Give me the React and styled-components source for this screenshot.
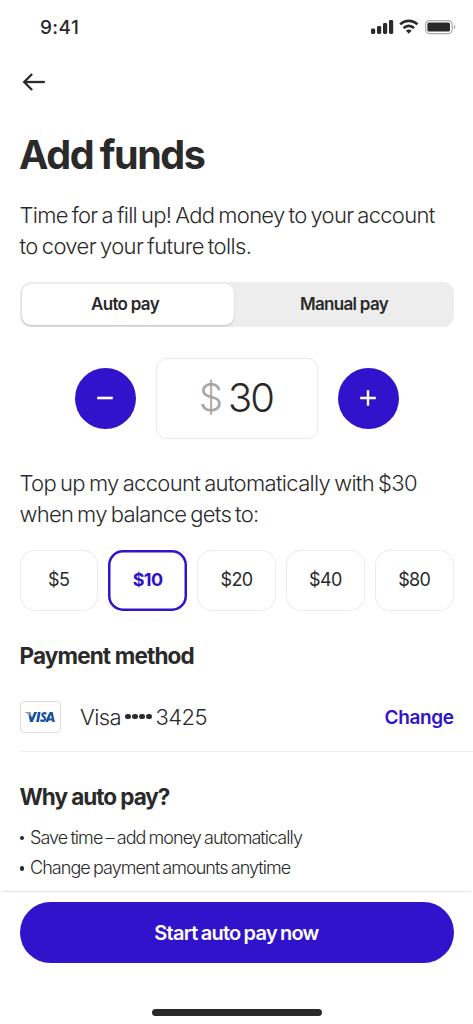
import React, { useState } from 'react'
import styled, { createGlobalStyle } from 'styled-components'

const thresholds = [5, 10, 20, 40, 80]

const reasons = [
  'Save time – add money automatically',
  'Change payment amounts anytime',
]

function StatusIcons() {
  return (
    <svg width="86" height="18" viewBox="0 0 86 18" fill="#2a2a2a">
      <rect x="1" y="10.5" width="4.2" height="5.5" rx="1.4" />
      <rect x="7" y="8" width="4.2" height="8" rx="1.4" />
      <rect x="13" y="5" width="4.2" height="11" rx="1.4" />
      <rect x="19" y="2" width="4.2" height="14" rx="1.4" />
      <g fill="none" stroke="#2a2a2a" strokeWidth="2.7">
        <path d="M30.2 6.4 a12.3 12.3 0 0 1 17.2 0" />
        <path d="M33.5 10.1 a7.6 7.6 0 0 1 10.6 0" />
      </g>
      <path d="M35.9 12.8 a4.2 4.2 0 0 1 5.8 0 L38.8 15.8 z" />
      <rect x="55.6" y="2.6" width="26.6" height="13" rx="4" fill="none" stroke="#a9a9a9" strokeWidth="1.2" />
      <rect x="57.4" y="4.6" width="22.6" height="9" rx="1.6" />
      <path d="M83.8 7 q1.6 0.5 1.6 2.1 t-1.6 2.1 z" fill="#a9a9a9" />
    </svg>
  )
}

function VisaLogo() {
  return (
    <svg width="30" height="12" viewBox="0 0 30 12">
      <path
        fill="#1552a0"
        d="M3.2 2 L7 6.6 L9.2 1 h2.9 L7.8 11 H5 z
           M12.9 1 h2.7 L13.9 11 h-2.7 z"
      />
      <path d="M0.2 1 h4.6 q1 0 1.2 0.9 l1 5 Q5 3 0.2 1.5 z" fill="#8d8f98" />
      <path d="M21.4 2.6 Q17.7 1.3 17.3 3.6 C17.1 5.5 20.5 5.8 20.1 8 Q19.5 10.7 15.3 9.3" fill="none" stroke="#1552a0" strokeWidth="2.2" />
      <path
        fill="#1552a0"
        fillRule="evenodd"
        d="M25.4 1 h2.3 L29.8 11 h-2.5 l-0.3-1.6 h-3.3 L23 11 h-2.8 l4-9.2 q0.3-0.8 1.2-0.8 z M26 3.8 l-1.5 3.7 h2.2 z"
      />
    </svg>
  )
}

function App() {
  const [mode, setMode] = useState('auto')
  const [amount, setAmount] = useState(30)
  const [threshold, setThreshold] = useState(10)

  return (
    <Screen>
      <GlobalStyle />
      <StatusBar>
        <Time>9:41</Time>
        <StatusIcons />
      </StatusBar>
      <Content>
        <BackButton aria-label="Back">
          <svg width="24" height="20" viewBox="0 0 24 20" fill="none" stroke="#2a2a2a" strokeWidth="2.3">
            <path d="M2.2 10 H22.8" />
            <path d="M10.1 2 L2.2 10 L10.1 18" />
          </svg>
        </BackButton>
        <Title>Add funds</Title>
        <Lead>
          <Line $ls="-0.71px">Time for a fill up! Add money to your account</Line>
          <Line $ls="-0.63px">to cover your future tolls.</Line>
        </Lead>
        <Segments>
          <Segment $active={mode === 'auto'} onClick={() => setMode('auto')}>Auto pay</Segment>
          <Segment $active={mode === 'manual'} onClick={() => setMode('manual')}>Manual pay</Segment>
        </Segments>
        <Stepper>
          <RoundButton aria-label="Less" onClick={() => setAmount(amount - 5)}>
            <svg width="16" height="16" viewBox="0 0 16 16" stroke="#fff" strokeWidth="2.6">
              <path d="M0.2 8 H15.8" />
            </svg>
          </RoundButton>
          <AmountBox>
            <Currency>$</Currency>
            <Amount>{amount}</Amount>
          </AmountBox>
          <RoundButton aria-label="More" onClick={() => setAmount(amount + 5)}>
            <svg width="16" height="16" viewBox="0 0 16 16" stroke="#fff" strokeWidth="2.4">
              <path d="M0.2 8 H15.8 M8 0.2 V15.8" />
            </svg>
          </RoundButton>
        </Stepper>
        <Lead $top="29.5px">
          <Line $ls="-0.67px">Top up my account automatically with ${amount}</Line>
          <Line $ls="-0.73px">when my balance gets to:</Line>
        </Lead>
        <Options>
          {thresholds.map((value) => (
            <Option key={value} $active={value === threshold} onClick={() => setThreshold(value)}>
              ${value}
            </Option>
          ))}
        </Options>
        <Heading $ls="-0.85px">Payment method</Heading>
        <PaymentRow>
          <CardBadge>
            <VisaLogo />
          </CardBadge>
          <CardName>
            <span>Visa</span>
            <Dots><i /><i /><i /><i /></Dots>
            <span>3425</span>
          </CardName>
          <ChangeLink>Change</ChangeLink>
        </PaymentRow>
        <Heading $ls="-1.03px">Why auto pay?</Heading>
        <Reasons>
          {reasons.map((reason) => (
            <li key={reason}>{reason}</li>
          ))}
        </Reasons>
      </Content>
      <Footer>
        <StartButton>Start auto pay now</StartButton>
        <HomeIndicator />
      </Footer>
    </Screen>
  )
}

export default App

const GlobalStyle = createGlobalStyle`
  * {
    box-sizing: border-box;
  }
  body {
    margin: 0;
    background: #fff;
  }
  button {
    font-family: inherit;
    color: inherit;
    border: 0;
    padding: 0;
    background: none;
    cursor: pointer;
  }
  svg {
    display: block;
  }
`

const Screen = styled.div`
  width: 473px;
  height: 1024px;
  display: flex;
  flex-direction: column;
  overflow: hidden;
  background: #fff;
  color: #2a2a2a;
  font-family: Inter, 'Liberation Sans', sans-serif;
`

const StatusBar = styled.div`
  height: 54px;
  padding: 0 17px 0 40px;
  display: flex;
  align-items: center;
  justify-content: space-between;
  flex-shrink: 0;
`

const Time = styled.span`
  font-size: 19px;
  font-weight: 500;
  letter-spacing: 0.4px;
`

const Content = styled.div`
  flex: 1;
  min-height: 0;
  padding: 0 19.5px;
`

const BackButton = styled.button`
  display: flex;
  align-items: center;
  width: 30px;
  height: 56px;
  padding-left: 2.5px;
`

const Title = styled.h1`
  margin: 21px 0 0 -0.5px;
  font-size: 39.5px;
  line-height: 48px;
  font-weight: 700;
  letter-spacing: -1.4px;
  word-spacing: -1.5px;
  white-space: nowrap;
`

const Lead = styled.p`
  margin: ${(props) => props.$top || '21px'} 0 0;
`

const Line = styled.span`
  display: block;
  font-size: 22px;
  line-height: 30.5px;
  font-weight: 350;
  letter-spacing: ${(props) => props.$ls};
  word-spacing: -1.5px;
  white-space: nowrap;
`

const Segments = styled.div`
  display: flex;
  height: 45px;
  margin-top: 21px;
  padding: 2px;
  border-radius: 11px;
  background: #ededed;
`

const Segment = styled.button`
  flex: ${(props) => (props.$active ? '0 0 212px' : '1')};
  padding: ${(props) => (props.$active ? '0 5px 2px 0' : '0 0 2px 3px')};
  border-radius: 9px;
  font-size: 17px;
  font-weight: 600;
  letter-spacing: -0.7px;
  background: ${(props) => (props.$active ? '#fff' : 'transparent')};
  box-shadow: ${(props) => (props.$active ? '0 1px 2px rgba(0, 0, 0, 0.2)' : 'none')};
`

const Stepper = styled.div`
  display: flex;
  align-items: center;
  justify-content: center;
  gap: 20px;
  margin-top: 30.5px;
`

const RoundButton = styled.button`
  display: flex;
  align-items: center;
  justify-content: center;
  width: 61px;
  height: 61px;
  border-radius: 50%;
  background: #3013ca;
`

const AmountBox = styled.div`
  display: flex;
  align-items: center;
  justify-content: center;
  gap: 5px;
  width: 162px;
  height: 81px;
  padding: 0 1px 2px 0;
  border: 1px solid #e9e9e9;
  border-radius: 10px;
  font-size: 40px;
  font-weight: 300;
`

const Currency = styled.span`
  color: #a6a6a6;
  font-size: 38px;
`

const Amount = styled.span`
  letter-spacing: -2px;
`

const Options = styled.div`
  display: grid;
  grid-template-columns: repeat(5, 1fr);
  gap: 10.4px;
  margin-top: 20.5px;
`

const Option = styled.button`
  height: 61px;
  padding-bottom: 1px;
  box-shadow: inset 0 0 0 ${(props) => (props.$active ? '2.5px #3013ca' : '1px #ebebeb')};
  border-radius: 15px;
  font-size: 18px;
  font-weight: ${(props) => (props.$active ? 700 : 400)};
  letter-spacing: -0.6px;
  color: ${(props) => (props.$active ? '#3013ca' : '#2a2a2a')};
`

const Heading = styled.h2`
  margin: 29.5px 0 0;
  font-size: 22.5px;
  line-height: 31px;
  font-weight: 700;
  letter-spacing: ${(props) => props.$ls};
  white-space: nowrap;
`

const PaymentRow = styled.div`
  display: flex;
  align-items: center;
  height: 80.5px;
  margin-right: -19.5px;
  padding: 11.5px 19.5px 0 0;
  border-bottom: 1px solid #ececec;
`

const CardBadge = styled.div`
  display: flex;
  align-items: center;
  justify-content: center;
  width: 41px;
  height: 32px;
  border: 1.5px solid #dedede;
  border-radius: 4px;
`

const CardName = styled.div`
  display: flex;
  align-items: center;
  flex: 1;
  gap: 4px;
  margin-left: 19.5px;
  font-size: 22px;
  font-weight: 350;
  letter-spacing: -0.6px;
`

const Dots = styled.span`
  display: flex;
  gap: 1.4px;

  i {
    width: 5.6px;
    height: 5.6px;
    border-radius: 50%;
    background: #2a2a2a;
  }
`

const ChangeLink = styled.button`
  padding-top: 1px;
  font-size: 19px;
  font-weight: 600;
  letter-spacing: -0.4px;
  color: #3013ca;
`

const Reasons = styled.ul`
  list-style: none;
  margin: 10.5px 0 0;
  padding: 0;
  font-size: 18px;
  line-height: 30.5px;
  font-weight: 350;
  letter-spacing: -0.94px;
  word-spacing: -1px;
  white-space: nowrap;

  li {
    display: flex;
    align-items: center;
  }

  li::before {
    content: '';
    width: 4.5px;
    height: 4.5px;
    margin-right: 6px;
    border-radius: 50%;
    background: #2a2a2a;
  }
`

const Footer = styled.div`
  display: flex;
  flex-direction: column;
  align-items: center;
  flex-shrink: 0;
  height: 133px;
  margin: 0 2px;
  padding: 10px 17.5px 0;
  border-top: 1px solid #e6e6e6;
`

const StartButton = styled.button`
  width: 100%;
  height: 61px;
  border-radius: 31px;
  background: #3013ca;
  color: #fff;
  font-size: 20px;
  font-weight: 600;
  letter-spacing: -0.75px;
  word-spacing: -1.2px;
`

const HomeIndicator = styled.div`
  width: 170px;
  height: 6.5px;
  margin-top: 46px;
  border-radius: 4px;
  background: #2a2a2a;
`
